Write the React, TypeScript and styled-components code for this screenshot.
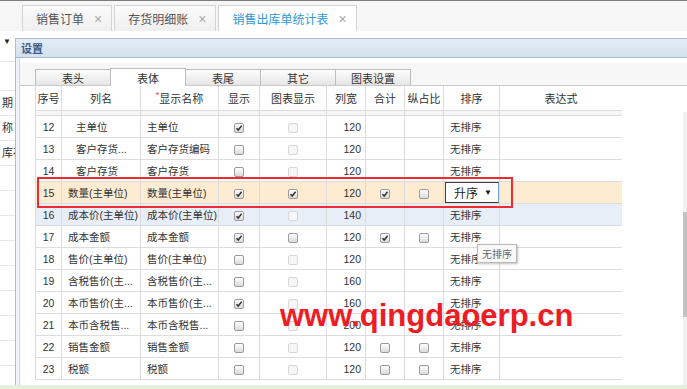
import React from "react";
import styled, { createGlobalStyle } from "styled-components";

const GlobalStyle = createGlobalStyle`
  html, body {
    margin: 0;
    padding: 0;
    background: #fff;
  }
  body {
    font-family: "Liberation Sans", "Noto Sans CJK SC", sans-serif;
    color: #333;
  }
`;

const Page = styled.div`
  position: relative;
  width: 687px;
  height: 389px;
  overflow: hidden;
  display: flex;
  flex-direction: column;
  background: #fff;
`;

/* top document tabs */
const TabBar = styled.div`
  height: 30px;
  flex-shrink: 0;
  border-top: 1px solid #7d7d7d;
  background: #f6f6f6;
  display: flex;
  align-items: flex-end;
  gap: 2px;
  padding-left: 22px;
`;

const DocTab = styled.div<{ $active?: boolean }>`
  height: 26px;
  box-sizing: border-box;
  display: flex;
  align-items: center;
  gap: 10px;
  padding: 0 9px 0 13px;
  border: 1px solid #d3d3d3;
  border-bottom: none;
  background: ${(p) => (p.$active ? "#fff" : "linear-gradient(#fbfbfb, #efefef)")};
  color: ${(p) => (p.$active ? "#2c9ad7" : "#555")};
  font-size: 12px;
`;

const Close = styled.span`
  font-size: 14px;
  line-height: 1;
  color: #a8a8a8;
`;

const Main = styled.div`
  flex: 1;
  min-height: 0;
  display: flex;
`;

/* panel behind the dialog, mostly hidden */
const Side = styled.aside`
  width: 15px;
  flex-shrink: 0;
  overflow: hidden;
  font-size: 11px;
  color: #333;
`;

const SideHead = styled.div`
  height: 24px;
  padding: 6px 0 0 3px;
  border-bottom: 1px solid #e4e4e4;
  font-size: 8px;
  color: #222;
`;

const SideRows = styled.div`
  padding-top: 4px;
`;

const SideRow = styled.div`
  height: 24px;
  line-height: 24px;
  padding-left: 2px;
  white-space: nowrap;
  border-bottom: 1px solid #e6e6e6;
`;

/* settings dialog */
const Dialog = styled.section`
  flex: 1;
  min-width: 0;
  margin-top: 7px;
  display: flex;
  flex-direction: column;
  border-left: 1px solid #a9bdd4;
  background: #eef3f9;
`;

const DialogTitle = styled.div`
  height: 18px;
  flex-shrink: 0;
  border-top: 1px solid #a9bdd4;
  border-bottom: 1px solid #a9bdd4;
  background: linear-gradient(#e4edf6, #d3e1ef);
  padding-left: 5px;
  display: flex;
  align-items: center;
  font-size: 11px;
  font-weight: bold;
  color: #3a5b88;
`;

const DialogBody = styled.div`
  flex: 1;
  min-height: 0;
  margin-left: 3px;
  border-left: 1px solid #c8d6e5;
  background: #fff;
  padding-top: 5px;
  display: flex;
  flex-direction: column;
`;

const SheetTabs = styled.div`
  height: 22px;
  flex-shrink: 0;
  display: flex;
  align-items: flex-end;
  padding-left: 15px;
  background: #f6f6f6;
  border-bottom: 1px solid #c9c9c9;
`;

const SheetTab = styled.div<{ $active?: boolean }>`
  position: relative;
  z-index: ${(p) => (p.$active ? 1 : 0)};
  width: 76px;
  height: ${(p) => (p.$active ? 18 : 16)}px;
  box-sizing: border-box;
  margin-right: -1px;
  margin-bottom: ${(p) => (p.$active ? -1 : 0)}px;
  display: flex;
  align-items: center;
  justify-content: center;
  border: 1px solid #bdbdbd;
  border-bottom: none;
  background: ${(p) => (p.$active ? "#fff" : "linear-gradient(#fdfdfd, #e6e6e6)")};
  font-size: 11px;
  color: #333;
`;

const Sheet = styled.div`
  flex: 1;
  min-height: 0;
  display: flex;
  padding-left: 15px;
`;

const TableWrap = styled.div`
  position: relative;
  width: 587px;
  flex-shrink: 0;
  overflow: hidden;
`;

const Filler = styled.div`
  flex: 1;
`;

const ScrollTrack = styled.div`
  width: 4px;
  margin-top: 26px;
  background: #f0f0f0;
`;

const ScrollThumb = styled.div`
  margin-top: 100px;
  height: 105px;
  background: #c2c2c2;
`;

const Grid = styled.table`
  width: 587px;
  table-layout: fixed;
  border-collapse: collapse;
  font-size: 10.5px;
  color: #333;
`;

const Col = styled.col<{ $w: number }>`
  width: ${(p) => p.$w}px;
`;

const HeadCell = styled.th`
  height: 24px;
  padding: 0;
  border: 1px solid #dcdcdc;
  border-top: none;
  font-weight: normal;
  font-size: 11px;
  text-align: center;
  white-space: nowrap;
`;

const Required = styled.span`
  color: #e23a3a;
  font-size: 9px;
  vertical-align: top;
`;

const GapRow = styled.tr`
  height: 5px;
  background: #f6f6f6;

  td {
    border: 1px solid #dcdcdc;
    padding: 0;
  }
`;

const Row = styled.tr<{ $tone?: "edit" | "hover" }>`
  height: 22px;
  background: ${(p) =>
    p.$tone === "edit" ? "#fdebd2" : p.$tone === "hover" ? "#e8eef7" : "#fff"};
`;

const Cell = styled.td<{ $align?: "left" | "center" | "right"; $pad?: number }>`
  padding: 0 ${(p) => (p.$align === "right" ? 4 : 0)}px 0 ${(p) => p.$pad ?? 0}px;
  border: 1px solid #dcdcdc;
  text-align: ${(p) => p.$align ?? "left"};
  white-space: nowrap;
  overflow: hidden;
`;

type Box = "on" | "no" | "dis" | undefined;

const CheckBox = styled.span<{ $state: Box }>`
  display: inline-block;
  width: 10px;
  height: 10px;
  box-sizing: border-box;
  border-radius: 2px;
  vertical-align: middle;
  border: 1px solid ${(p) => (p.$state === "dis" ? "#d8d8d8" : "#9c9c9c")};
  background: ${(p) =>
    p.$state === "dis" ? "#f6f6f6" : "linear-gradient(#fdfdfd, #dadada)"};

  svg {
    display: block;
  }
`;

const SortSelect = styled.div`
  height: 21px;
  box-sizing: border-box;
  margin-left: 1px;
  border: 1px solid #3a3a3a;
  border-right-color: #6fa6da;
  background: #fff;
  display: flex;
  align-items: center;
  justify-content: space-between;
  padding: 0 6px 0 8px;
  font-size: 12px;
  color: #222;
`;

const Caret = styled.span`
  font-size: 8px;
  color: #111;
`;

const Callout = styled.div`
  position: absolute;
  left: 2px;
  top: 91px;
  width: 476px;
  height: 31px;
  box-sizing: border-box;
  border: 2px solid #ee2b30;
  pointer-events: none;
`;

const Tip = styled.div`
  position: absolute;
  left: 442px;
  top: 158px;
  padding: 1px 4px;
  border: 1px solid #b9b9b9;
  background: #f8f8f8;
  box-shadow: 1px 1px 2px rgba(0, 0, 0, 0.25);
  font-size: 10px;
  color: #666;
`;

const Watermark = styled.div`
  position: absolute;
  left: 245px;
  top: 214px;
  font-family: "Liberation Sans", sans-serif;
  font-size: 31px;
  line-height: 31px;
  font-weight: bold;
  color: #ee1c25;
  white-space: nowrap;
  pointer-events: none;
`;

const BottomStrip = styled.div`
  height: 4px;
  flex-shrink: 0;
  background: #e5efdc;
`;

function Check({ state }: { state: Box }) {
  if (!state) return null;
  return (
    <CheckBox $state={state}>
      {state === "on" && (
        <svg width="8" height="8" viewBox="0 0 8 8">
          <path d="M1.5 4.2 L3.2 6 L6.6 1.8" fill="none" stroke="#333" strokeWidth="1.5" />
        </svg>
      )}
    </CheckBox>
  );
}

const widths = [26, 79, 78, 41, 67, 39, 39, 39, 56, 123];
const headers = ["序号", "列名", "显示名称", "显示", "图表显示", "列宽", "合计", "纵占比", "排序", "表达式"];

type Item = {
  no: number;
  name: string;
  label: string;
  show: Box;
  chart: Box;
  width: number;
  sum?: Box;
  ratio?: Box;
  indent?: boolean;
  tone?: "edit" | "hover";
};

const items: Item[] = [
  { no: 12, name: "主单位", label: "主单位", show: "on", chart: "dis", width: 120, indent: true },
  { no: 13, name: "客户存货...", label: "客户存货编码", show: "no", chart: "dis", width: 120, indent: true },
  { no: 14, name: "客户存货", label: "客户存货", show: "no", chart: "dis", width: 120, indent: true },
  { no: 15, name: "数量(主单位)", label: "数量(主单位)", show: "on", chart: "on", width: 120, sum: "on", ratio: "no", tone: "edit" },
  { no: 16, name: "成本价(主单位)", label: "成本价(主单位)", show: "on", chart: "dis", width: 140, tone: "hover" },
  { no: 17, name: "成本金额", label: "成本金额", show: "on", chart: "no", width: 120, sum: "on", ratio: "no" },
  { no: 18, name: "售价(主单位)", label: "售价(主单位)", show: "no", chart: "dis", width: 120 },
  { no: 19, name: "含税售价(主...", label: "含税售价(主...", show: "no", chart: "dis", width: 160 },
  { no: 20, name: "本币售价(主...", label: "本币售价(主...", show: "on", chart: "dis", width: 160 },
  { no: 21, name: "本币含税售...", label: "本币含税售...", show: "no", chart: "dis", width: 200 },
  { no: 22, name: "销售金额", label: "销售金额", show: "no", chart: "dis", width: 120, sum: "no", ratio: "no" },
  { no: 23, name: "税额", label: "税额", show: "no", chart: "dis", width: 120, sum: "no", ratio: "no" },
];

export default function App() {
  return (
    <Page>
      <GlobalStyle />
      <TabBar>
        <DocTab>
          销售订单<Close>×</Close>
        </DocTab>
        <DocTab>
          存货明细账<Close>×</Close>
        </DocTab>
        <DocTab $active>
          销售出库单统计表<Close>×</Close>
        </DocTab>
      </TabBar>

      <Main>
        <Side>
          <SideHead>▼</SideHead>
          <SideRows>
            {["", "期", "称", "库存", "", "", "", "", "", "", "", "", ""].map((t, i) => (
              <SideRow key={i}>{t}</SideRow>
            ))}
          </SideRows>
        </Side>

        <Dialog>
          <DialogTitle>设置</DialogTitle>
          <DialogBody>
            <SheetTabs>
              <SheetTab>表头</SheetTab>
              <SheetTab $active>表体</SheetTab>
              <SheetTab>表尾</SheetTab>
              <SheetTab>其它</SheetTab>
              <SheetTab>图表设置</SheetTab>
            </SheetTabs>

            <Sheet>
              <TableWrap>
                <Grid>
                  <colgroup>
                    {widths.map((w, i) => (
                      <Col key={i} $w={w} />
                    ))}
                  </colgroup>
                  <thead>
                    <tr>
                      {headers.map((h) => (
                        <HeadCell key={h}>
                          {h === "显示名称" && <Required>*</Required>}
                          {h}
                        </HeadCell>
                      ))}
                    </tr>
                  </thead>
                  <tbody>
                    <GapRow>
                      {widths.map((_, i) => (
                        <td key={i} />
                      ))}
                    </GapRow>
                    {items.map((it) => (
                      <Row key={it.no} $tone={it.tone}>
                        <Cell $align="center">{it.no}</Cell>
                        <Cell $pad={it.indent ? 14 : 6}>{it.name}</Cell>
                        <Cell $pad={6}>{it.label}</Cell>
                        <Cell $align="center">
                          <Check state={it.show} />
                        </Cell>
                        <Cell $align="center">
                          <Check state={it.chart} />
                        </Cell>
                        <Cell $align="right">{it.width}</Cell>
                        <Cell $align="center">
                          <Check state={it.sum} />
                        </Cell>
                        <Cell $align="center">
                          <Check state={it.ratio} />
                        </Cell>
                        <Cell $pad={it.tone === "edit" ? 0 : 6}>
                          {it.tone === "edit" ? (
                            <SortSelect>
                              升序<Caret>▼</Caret>
                            </SortSelect>
                          ) : (
                            "无排序"
                          )}
                        </Cell>
                        <Cell />
                      </Row>
                    ))}
                  </tbody>
                </Grid>
                <Callout />
                <Tip>无排序</Tip>
                <Watermark>www.qingdaoerp.cn</Watermark>
              </TableWrap>
              <Filler />
              <ScrollTrack>
                <ScrollThumb />
              </ScrollTrack>
            </Sheet>
          </DialogBody>
        </Dialog>
      </Main>

      <BottomStrip />
    </Page>
  );
}
